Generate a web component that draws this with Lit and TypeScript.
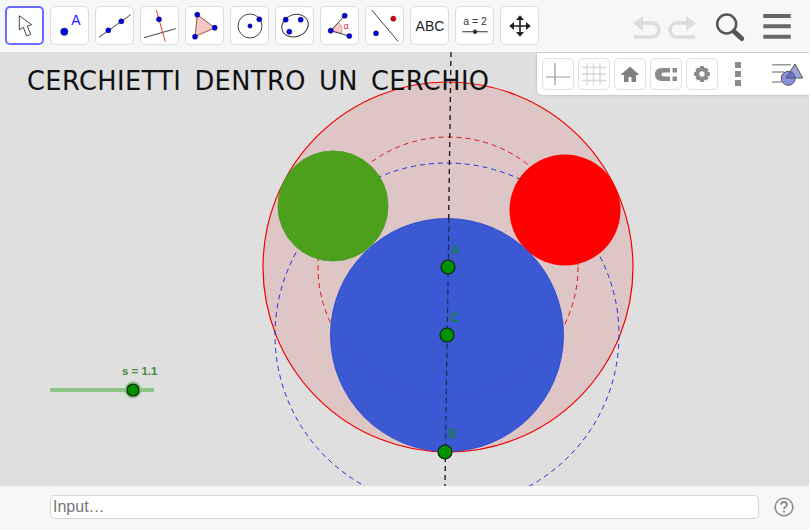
import { LitElement, css, html, svg } from "lit";
import { customElement } from "lit/decorators.js";

const BLUE = "#0000d8";
const dot = (x: number, y: number, fill = BLUE, r = 2.6) =>
  svg`<circle cx=${x} cy=${y} r=${r} fill=${fill} stroke="#1a1a4a" stroke-width="0.4"></circle>`;

const toolIcons = [
  svg`<path d="M13.3 8.7V23l4-2.7 3.4 8.7 4-1.7-3.4-8.3 4.4-1.3z" fill="#fff" stroke="#444" stroke-width="1"></path>`,
  svg`${dot(13.3, 24.7, BLUE, 3.7)}<text x="25" y="18.3" class="tool-a">A</text>`,
  svg`<line x1="3" y1="30.3" x2="34.7" y2="7.7" stroke="#444"></line>${dot(12.3, 23.3)}${dot(25.3, 14.3)}`,
  svg`<line x1="3" y1="30.7" x2="34.7" y2="21.7" stroke="#444"></line><line x1="15.3" y1="3" x2="24.3" y2="34.7" stroke="#f04040"></line>${dot(18, 12.3)}`,
  svg`<path d="M11.3 7.7 28.7 20.7 9 29.7z" fill="#f3c9c4" stroke="#a0523f"></path>${dot(11.3, 7.7)}${dot(28.7, 20.7)}${dot(9, 29.7)}`,
  svg`<circle cx="19" cy="19" r="12" fill="none" stroke="#444"></circle>${dot(19, 19, BLUE, 2.2)}${dot(28.3, 12.3)}`,
  svg`<ellipse cx="19" cy="18.7" rx="13.5" ry="11" transform="rotate(-20 19 18.7)" fill="none" stroke="#333"></ellipse>${dot(9.7, 12.7)}${dot(24.7, 12.7)}${dot(13.3, 24.7)}`,
  svg`<path d="M9.7 23.7 17.5 15.5A11 11 0 0 1 20.5 26.5z" fill="#f3c9c4" stroke="#e88"></path><path d="M23.7 8.7 9.7 23.7 28.3 29" fill="none" stroke="#444"></path>${dot(9.7, 23.7)}${dot(23.7, 8.7)}${dot(28.3, 29)}<text x="22.5" y="21.5" class="tool-alpha">α</text>`,
  svg`<line x1="5.7" y1="3" x2="32.3" y2="34.7" stroke="#444"></line>${dot(27.3, 11.7, "#e00000")}${dot(10, 26.3)}`,
  svg`<text x="19" y="24" class="tool-abc">ABC</text>`,
  svg`<text x="19" y="17.5" class="tool-num">a = 2</text><line x1="6.3" y1="24.7" x2="31.7" y2="24.7" stroke="#555" stroke-width="1.2"></line><circle cx="19" cy="24.7" r="2.2" fill="#333"></circle>`,
  svg`<path d="M19 8.2 15 13H23zM19 29.8 15 25H23zM8.2 19 13 15V23zM29.8 19 25 15V23z" fill="#222"></path><path d="M19 12V26M12 19H26" stroke="#222" stroke-width="1.6"></path>`,
];

const styleIcons = [
  svg`<path d="M13 5V27M4 19H28" stroke="#999" stroke-width="1.2"></path>`,
  svg`<path d="M9 5V27M15.5 5V27M22 5V27M4 9.5H28M4 16H28M4 22.5H28" stroke="#d8d8d8" stroke-width="1.3"></path>`,
  svg`<path d="M16 8.5 6.5 17H10V24H14.5V19H17.5V24H22V17H25.5z" fill="#808080"></path>`,
  svg`<path d="M20 10H12C7 10 5 13 5 16.5S7 23 12 23H20V18.5H14C12.5 18.5 11.5 17.8 11.5 16.5S12.5 14.5 14 14.5H20z" fill="#8a8a8a"></path><path d="M22.5 10H27V14.5H22.5zM22.5 18.5H27V23H22.5z" fill="#8a8a8a"></path>`,
  svg`<g transform="translate(16 16) scale(0.88)"><path d="M-2-9H2L2.6-6.4 4.7-7.5 7.5-4.7 6.4-2.6 9-2V2L6.4 2.6 7.5 4.7 4.7 7.5 2.6 6.4 2 9H-2L-2.6 6.4-4.7 7.5-7.5 4.7-6.4 2.6-9 2V-2L-6.4-2.6-7.5-4.7-4.7-7.5-2.6-6.4z" fill="#8a8a8a"></path><circle r="3" fill="#fff"></circle></g>`,
];

@customElement("app-root")
export class AppRoot extends LitElement {
  static styles = css`
    :host {
      display: flex;
      flex-direction: column;
      width: 811px;
      height: 530px;
      box-sizing: border-box;
      padding: 0 2px 1px 0;
      background: #fff;
      overflow: hidden;
      font-family: "Liberation Sans", Arial, sans-serif;
    }

    .toolbar {
      flex: none;
      height: 52px;
      box-sizing: border-box;
      padding: 6px 0 0 5px;
      display: flex;
      gap: 6px;
      background: #f7f7f7;
    }

    .tool {
      flex: none;
      width: 39px;
      height: 39px;
      box-sizing: border-box;
      border: 1px solid #dcdcdc;
      border-radius: 5px;
      background: #fff;
      position: relative;
    }

    .tool.active {
      border: 2px solid #6a6cff;
    }

    .tool svg {
      position: absolute;
      left: 0;
      top: 0;
      width: 38px;
      height: 38px;
    }

    .tool.active svg {
      left: -1px;
      top: -1px;
    }

    .tool-a {
      font-size: 14px;
      fill: #1a1aff;
      text-anchor: middle;
    }

    .tool-alpha {
      font-size: 9px;
      fill: #e03030;
    }

    .tool-abc {
      font-size: 14px;
      fill: #222;
      text-anchor: middle;
    }

    .tool-num {
      font-size: 10.5px;
      fill: #333;
      text-anchor: middle;
    }

    .actions {
      margin-left: auto;
      width: 176px;
      height: 45px;
      flex: none;
    }

    .canvas {
      flex: 1;
      position: relative;
      background: #dfdfdf;
      overflow: hidden;
    }

    .drawing {
      position: absolute;
      left: 0;
      top: 0;
      width: 811px;
      height: 434px;
    }

    .title {
      font-family: "DejaVu Sans", sans-serif;
      font-size: 25.7px;
      letter-spacing: 0.4px;
      word-spacing: -2px;
      fill: #111;
      white-space: pre;
    }

    .pt-label {
      font-family: "Liberation Sans", sans-serif;
      font-size: 12px;
      fill: #0a8a0a;
    }

    .slider-label {
      font-family: "Liberation Sans", sans-serif;
      font-size: 11.5px;
      font-weight: bold;
      fill: #4a8a3c;
    }

    .stylebar {
      position: absolute;
      right: 0;
      top: 1px;
      width: 272px;
      height: 42px;
      box-sizing: border-box;
      padding: 5px 0 0 5px;
      display: flex;
      gap: 4px;
      background: #fff;
      border-bottom-left-radius: 5px;
      box-shadow: 0 0 3px rgba(0, 0, 0, 0.25);
    }

    .style-btn {
      flex: none;
      width: 32px;
      height: 32px;
      box-sizing: border-box;
      border: 1px solid #e0e0e0;
      border-radius: 5px;
      position: relative;
    }

    .style-btn svg {
      position: absolute;
      left: -1px;
      top: -1px;
      width: 32px;
      height: 32px;
    }

    .more {
      flex: none;
      width: 6px;
      margin: 4px 0 0 13px;
      display: flex;
      flex-direction: column;
      gap: 3px;
    }

    .more span {
      height: 6px;
      background: #8a8a8a;
    }

    .views {
      flex: none;
      width: 33px;
      height: 32px;
      margin-left: 26px;
    }

    .inputbar {
      flex: none;
      height: 43px;
      box-sizing: border-box;
      padding: 9px 0 0 50px;
      display: flex;
      gap: 15px;
      background: #f7f7f7;
    }

    .input {
      flex: none;
      width: 709px;
      height: 24px;
      box-sizing: border-box;
      padding: 0 2px;
      border: 1px solid #d5d5d5;
      border-radius: 5px;
      background: #fff;
      color: #757575;
      font-size: 16px;
      line-height: 22px;
    }

    .help {
      flex: none;
      width: 20px;
      height: 20px;
      margin-top: 2px;
    }
  `;

  render() {
    return html`
      <div class="toolbar">
        ${toolIcons.map(
          (icon, i) => html`
            <div class="tool ${i === 0 ? "active" : ""}">
              <svg viewBox="0 0 38 38">${icon}</svg>
            </div>
          `
        )}
        <svg class="actions" viewBox="0 0 176 45">
          <g transform="translate(-633 -6)">
            <path d="M637 23H652a7 7 0 0 1 0 14H634" fill="none" stroke="#dcdcdc" stroke-width="3.5"></path>
            <path d="M633 23 643 16V31z" fill="#dcdcdc"></path>
            <path d="M692 23H677a7 7 0 0 0 0 14H695" fill="none" stroke="#dcdcdc" stroke-width="3.5"></path>
            <path d="M696 23 686 16V31z" fill="#dcdcdc"></path>
            <circle cx="726.7" cy="24" r="9.5" fill="none" stroke="#555" stroke-width="2.5"></circle>
            <path d="M734 31.5 741.7 38.5" stroke="#555" stroke-width="5" stroke-linecap="round"></path>
            <path d="M763.3 16H790.7M763.3 26.3H790.7M763.3 36.7H790.7" stroke="#666" stroke-width="4"></path>
          </g>
        </svg>
      </div>
      <div class="canvas">
        ${this.renderDrawing()}
        <div class="stylebar">
          ${styleIcons.map(
            (icon) => html`<div class="style-btn"><svg viewBox="0 0 32 32">${icon}</svg></div>`
          )}
          <div class="more"><span></span><span></span><span></span></div>
          <svg class="views" viewBox="0 0 33 32">
            <path d="M1 6.7H20M1 14H13M1 24H11" stroke="#999" stroke-width="1.6"></path>
            <circle cx="17.3" cy="20.3" r="7" fill="#8a90e0" stroke="#555"></circle>
            <path d="M24 6 31.7 20H15z" fill="rgba(80,90,180,0.55)" stroke="#555"></path>
          </svg>
        </div>
      </div>
      <div class="inputbar">
        <div class="input">Input…</div>
        <svg class="help" viewBox="0 0 20 20">
          <circle cx="10" cy="10" r="8.8" fill="none" stroke="#8a8a8a" stroke-width="1.6"></circle>
          <path d="M7 7.8C7 6 8.4 5 10 5S13 6 13 7.7C13 9.8 10 9.8 10 12" fill="none" stroke="#8a8a8a" stroke-width="1.8"></path>
          <circle cx="10" cy="14.6" r="1.1" fill="#8a8a8a"></circle>
        </svg>
      </div>
    `;
  }

  // drawn in page coordinates, the canvas starts 52px down
  renderDrawing() {
    return html`
      <svg class="drawing" viewBox="0 52 811 434">
        <circle cx="448" cy="267" r="185" fill="rgba(220,100,100,0.2)" stroke="#f00000" stroke-width="1.2"></circle>
        <text class="title" x="27" y="89.5">CERCHIETTI  DENTRO  UN  CERCHIO</text>
        <circle cx="448" cy="267" r="130" fill="none" stroke="#e01010" stroke-dasharray="5 4"></circle>
        <circle cx="447" cy="335" r="172" fill="none" stroke="#2030e0" stroke-dasharray="5 4"></circle>
        <line x1="451" y1="52" x2="445" y2="486" stroke="#111" stroke-width="1.3" stroke-dasharray="5 4"></line>
        <circle cx="333" cy="206" r="55" fill="rgba(70,158,20,0.96)" stroke="#4f9f30"></circle>
        <circle cx="565" cy="210" r="55.5" fill="#ff0000"></circle>
        <circle cx="447" cy="335" r="116.5" fill="rgba(52,84,210,0.96)" stroke="#2040d0" stroke-width="0.8"></circle>
        <line x1="449" y1="218" x2="445.4" y2="452" stroke="#111" stroke-width="1.2" stroke-dasharray="5 4" opacity="0.65"></line>
        <circle cx="448" cy="267" r="7" fill="#009000" stroke="#102010" stroke-width="1.2"></circle>
        <circle cx="447" cy="335" r="7" fill="#009000" stroke="#102010" stroke-width="1.2"></circle>
        <circle cx="445" cy="452" r="7" fill="#009000" stroke="#102010" stroke-width="1.2"></circle>
        <text class="pt-label" x="451.5" y="253.5">A</text>
        <text class="pt-label" x="450.5" y="321.5">C</text>
        <text class="pt-label" x="448.5" y="438">B</text>
        <text class="slider-label" x="122" y="375">s = 1.1</text>
        <line x1="50" y1="390" x2="154" y2="390" stroke="#8cc585" stroke-width="4"></line>
        <circle cx="133" cy="390" r="8.5" fill="#8cc585"></circle>
        <circle cx="133" cy="390" r="6" fill="#009000" stroke="#102010" stroke-width="1.2"></circle>
      </svg>
    `;
  }
}
